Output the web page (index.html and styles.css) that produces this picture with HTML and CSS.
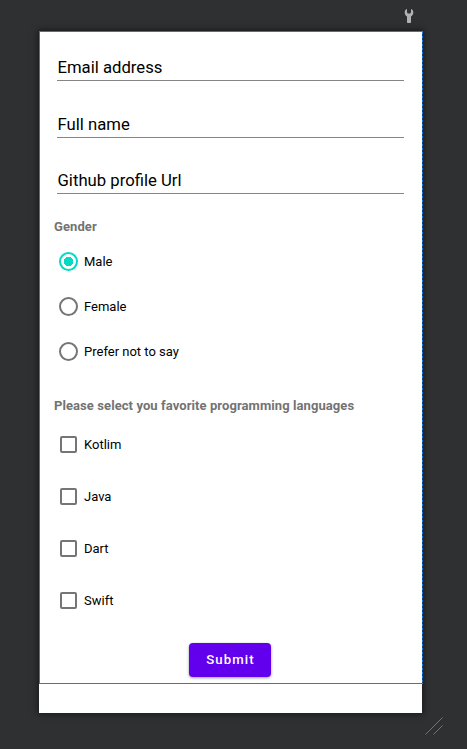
FILE: index.html
```
<!DOCTYPE html>
<html lang="en">
<head>
<meta charset="utf-8">
<title>Layout preview</title>
<link rel="stylesheet" href="styles.css">
</head>
<body>
<header class="toolbar">
  <svg class="wrench" width="10" height="15" viewBox="0 0 10 15"><path d="M3 0C1.400.5.7 1.800.7 3.500c0 1.800.8 3.200 2.300 4V13c0 .6.4 1 1 1h2c.6 0 1-.4 1-1V7.500c1.500-.8 2.300-2.200 2.300-4C9.300 1.800 8.600.5 7 0v3.500L6 4.500H4L3 3.500z"/></svg>
</header>
<main class="device">
  <form class="selection">
    <div class="field">Email address</div>
    <div class="field">Full name</div>
    <div class="field">Github profile Url</div>
    <h2 class="heading">Gender</h2>
    <div class="radios">
      <div class="option"><span class="radio checked"></span>Male</div>
      <div class="option"><span class="radio"></span>Female</div>
      <div class="option"><span class="radio"></span>Prefer not to say</div>
    </div>
    <h2 class="heading languages">Please select you favorite programming languages</h2>
    <div class="checks">
      <div class="option"><span class="box"></span>Kotlim</div>
      <div class="option"><span class="box"></span>Java</div>
      <div class="option"><span class="box"></span>Dart</div>
      <div class="option"><span class="box"></span>Swift</div>
    </div>
    <button class="submit" type="button">Submit</button>
  </form>
</main>
<footer class="corner">
  <svg width="18" height="18" viewBox="0 0 18 18"><path d="M.5 17.5l17-17M8.5 17.5l9-9"/></svg>
</footer>
</body>
</html>
```
FILE: styles.css
```
* { box-sizing: border-box; }
body {
  margin: 0;
  height: 749px;
  overflow: hidden;
  background: #2f3032;
  font-family: Roboto, sans-serif;
  color: #000;
}
.toolbar { height: 31px; padding: 9px 0 0 404px; }
.wrench { display: block; fill: #afb1b3; }
.device {
  width: 383px;
  height: 682px;
  margin-left: 39px;
  background: #fff;
  box-shadow: 0 0 6px 1px #171819;
}
.selection {
  width: 384px;
  height: 653px;
  display: flex;
  flex-direction: column;
  border: 1px solid #1a7de0;
  border-right: 0;
  padding: 14px 19px 0 14px;
  background: repeating-linear-gradient(#1a7de0 0 2px, #16416d 2px 4px) right / 1px 100% no-repeat;
}
.field {
  height: 35px;
  margin: 0 0 21.6px 3px;
  padding-left: .5px;
  line-height: 43px;
  font-size: 16.7px;
  border-bottom: 1px solid #858585;
}
.heading {
  margin: 1.2px 0 0;
  height: 20px;
  line-height: 20px;
  font-size: 13px;
  letter-spacing: .08px;
  font-weight: 700;
  color: #737373;
}
.radios { margin-top: 2.6px; }
.option {
  height: 44.75px;
  display: flex;
  align-items: center;
  gap: 6px;
  padding-left: 5px;
  font-size: 13px;
}
.radio {
  width: 19px;
  height: 19px;
  border: 2px solid #757575;
  border-radius: 50%;
}
.radio.checked {
  border-color: #03dac5;
  background: radial-gradient(circle, #03dac5 4.5px, transparent 5px);
}
.languages { margin-top: 22.2px; }
.checks { margin-top: 1.9px; }
.checks .option { height: 52.25px; }
.box {
  width: 17px;
  height: 17px;
  margin: 0 1px;
  border: 2px solid #757575;
  border-radius: 2px;
}
.submit {
  width: 82px;
  height: 34px;
  margin: 16.4px 0 0 135px;
  padding: 0 0 0 1px;
  border: 0;
  border-radius: 4px;
  background: #6200ee;
  color: #fff;
  font: 500 13.2px/34px Roboto, sans-serif;
  letter-spacing: 1.1px;
  box-shadow: 0 1px 3px rgba(0, 0, 0, .4);
}
.corner { padding: 4px 0 0 425px; }
.corner svg { display: block; fill: none; stroke: #85878a; stroke-width: .8; }
```
